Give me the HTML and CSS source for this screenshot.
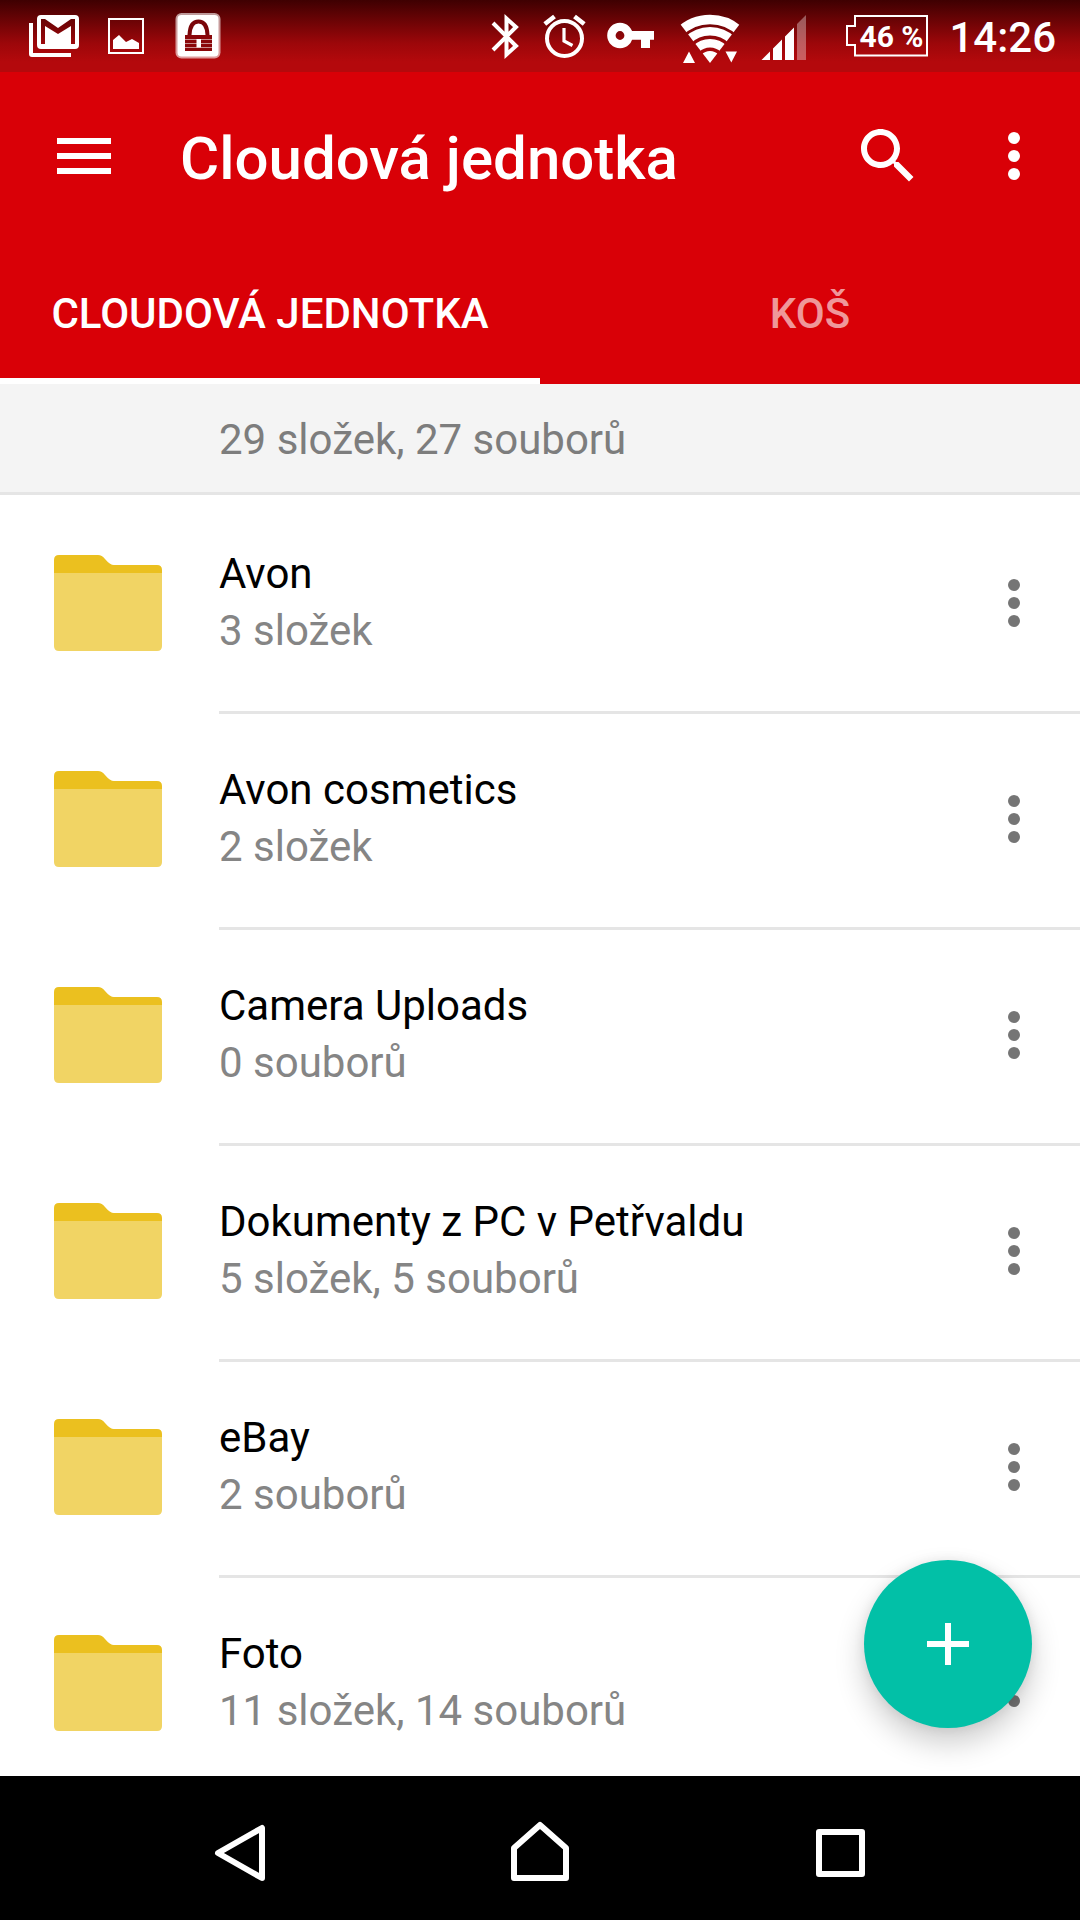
FILE: index.html
```html
<!DOCTYPE html>
<html lang="cs">
<head>
<meta charset="utf-8">
<meta name="viewport" content="width=device-width, initial-scale=1">
<title>Cloudová jednotka</title>
<link rel="stylesheet" href="styles.css">
</head>
<body>
<svg class="sprite" aria-hidden="true">
  <symbol id="folder" viewBox="0 0 108 96">
    <path fill="#ebc01f" d="M0 18V5Q0 0 5 0H44Q48 0 51 4Q56 10 60 10H103Q108 10 108 15V18Z"/>
    <path fill="#f1d464" d="M0 18H108V91Q108 96 103 96H5Q0 96 0 91Z"/>
  </symbol>
  <symbol id="more" viewBox="0 0 72 72">
    <circle cx="36" cy="18" r="6"/><circle cx="36" cy="36" r="6"/><circle cx="36" cy="54" r="6"/>
  </symbol>
</svg>
<div class="app">
  <div class="status">
    <div class="status-notes">
      <svg width="52" height="72" viewBox="27 0 52 72" fill="#fff" aria-hidden="true">
        <path d="M29 23H33V53H71V57H32Q29 57 29 54Z"/>
        <path fill-rule="evenodd" d="M41 15H75Q79 15 79 19V45Q79 49 75 49H41Q37 49 37 45V19Q37 15 41 15ZM41 44H45V26L58 34L71 26V44H75V19H71L58 28L45 19H41Z"/>
      </svg>
      <svg width="38" height="72" viewBox="107 0 38 72" fill="#fff" aria-hidden="true">
        <rect x="109" y="19" width="34" height="34" fill="none" stroke="#fff" stroke-width="2"/>
        <path d="M113 49V40L119 35L126 42L132 39L139 43V49Z"/>
      </svg>
      <svg width="50" height="72" viewBox="173 0 50 72" aria-hidden="true">
        <rect x="175.500" y="13" width="45" height="45.500" rx="6" fill="#fff" opacity=".6"/>
        <rect x="177.500" y="15" width="41" height="41.500" rx="4" fill="#fff"/>
        <path d="M189.500 35Q190 21.500 198.500 21.500T207.500 35" fill="none" stroke="#7a0609" stroke-width="4"/>
        <path fill="#8a070a" d="M185 35H212V51H185Z"/>
        <path stroke="#fff" stroke-opacity=".55" stroke-width="1" d="M185 39.500H212M185 43.500H212M185 47.500H212"/>
        <path fill="#fff" d="M196.500 39H201V47.500H196.500Z"/>
      </svg>
    </div>
    <div class="status-system">
      <svg width="32" height="72" viewBox="490 0 32 72" fill="none" stroke="#fff" stroke-width="4" aria-hidden="true">
        <path d="M493 23L516 46L506.500 54.500V18.500L516 27L493 50"/>
      </svg>
      <svg width="45" height="72" viewBox="542 0 45 72" fill="none" stroke="#fff" aria-hidden="true">
        <circle cx="564.500" cy="38.500" r="17.500" stroke-width="4"/>
        <path stroke-width="3.200" d="M564 28V41L572.500 45.500"/>
        <path stroke-width="4.600" d="M544.800 24L554.500 16.500M574.500 16.500L584.200 24"/>
      </svg>
      <svg width="48" height="72" viewBox="607 0 48 72" fill="#fff" aria-hidden="true">
        <circle cx="620" cy="35.500" r="8.600" fill="none" stroke="#fff" stroke-width="8.400"/>
        <path d="M629 31H654V39.700H650V48H641V39.700H629Z"/>
      </svg>
      <svg width="66" height="72" viewBox="675 0 66 72" fill="none" stroke="#fff" aria-hidden="true">
        <clipPath id="wifi-fan"><path d="M710 63L671 12H749Z"/></clipPath>
        <g clip-path="url(#wifi-fan)">
          <circle cx="710" cy="63" r="43.500" stroke-width="9.400"/>
          <circle cx="710" cy="63" r="31.700" stroke-width="8.600"/>
          <circle cx="710" cy="63" r="19.800" stroke-width="8.600"/>
          <circle cx="710" cy="63" r="6" stroke-width="12"/>
        </g>
        <path fill="#fff" stroke="none" d="M683 63L689 51.500L695 63ZM725.500 51.500H737L731.300 62.500Z"/>
      </svg>
      <svg width="46" height="72" viewBox="761 0 46 72" fill="#fff" aria-hidden="true">
        <path d="M761.500 60L770 51.500V60ZM773 60V48.500L782 39.500V60ZM785 60V36.500L794 27.500V60Z"/>
        <path opacity=".35" d="M797 60V24L806 15V60Z"/>
      </svg>
      <div class="battery">
        <svg width="83" height="72" viewBox="846 0 83 72" fill="none" stroke="#fff" stroke-width="2" aria-hidden="true">
          <path d="M855 16H927V55.500H855V45H847V26H855Z"/>
        </svg>
        <span class="battery-text">46 %</span>
      </div>
      <time class="clock">14:26</time>
    </div>
  </div>

  <header class="header">
    <div class="toolbar">
      <button class="icon-button" type="button" aria-label="Nabídka">
        <svg width="72" height="72" viewBox="0 0 72 72" fill="currentColor"><path d="M9 18H63V24H9ZM9 33H63V39H9ZM9 48H63V54H9Z"/></svg>
      </button>
      <h1 class="title">Cloudová jednotka</h1>
      <button class="icon-button" type="button" aria-label="Hledat">
        <svg width="72" height="72" viewBox="0 0 24 24" fill="currentColor"><path d="M15.500 14h-.79l-.28-.27C15.410 12.590 16 11.110 16 9.500 16 5.910 13.090 3 9.500 3S3 5.910 3 9.500 5.910 16 9.500 16c1.610 0 3.090-.59 4.230-1.570l.27.28v.79l5 4.990L20.490 19l-4.990-5zm-6 0C7.010 14 5 11.990 5 9.500S7.010 5 9.500 5 14 7.010 14 9.500 11.990 14 9.500 14z"/></svg>
      </button>
      <button class="icon-button" type="button" aria-label="Další možnosti">
        <svg width="72" height="72" fill="currentColor"><use href="#more"/></svg>
      </button>
    </div>
    <nav class="tabs">
      <a class="tab tab-active" href="#cloud" aria-current="page">CLOUDOVÁ JEDNOTKA</a>
      <a class="tab" href="#trash">KOŠ</a>
    </nav>
  </header>

  <main class="main" id="cloud">
    <p class="summary">29 složek, 27 souborů</p>
    <ul class="list">
      <li class="row">
        <svg class="folder" width="108" height="96" aria-hidden="true"><use href="#folder"/></svg>
        <div class="row-body">
          <a class="row-text" href="#avon"><span class="name">Avon</span><span class="count">3 složek</span></a>
          <button class="icon-button row-more" type="button" aria-label="Možnosti: Avon"><svg width="72" height="72" fill="currentColor"><use href="#more"/></svg></button>
        </div>
      </li>
      <li class="row">
        <svg class="folder" width="108" height="96" aria-hidden="true"><use href="#folder"/></svg>
        <div class="row-body">
          <a class="row-text" href="#avon-cosmetics"><span class="name">Avon cosmetics</span><span class="count">2 složek</span></a>
          <button class="icon-button row-more" type="button" aria-label="Možnosti: Avon cosmetics"><svg width="72" height="72" fill="currentColor"><use href="#more"/></svg></button>
        </div>
      </li>
      <li class="row">
        <svg class="folder" width="108" height="96" aria-hidden="true"><use href="#folder"/></svg>
        <div class="row-body">
          <a class="row-text" href="#camera-uploads"><span class="name">Camera Uploads</span><span class="count">0 souborů</span></a>
          <button class="icon-button row-more" type="button" aria-label="Možnosti: Camera Uploads"><svg width="72" height="72" fill="currentColor"><use href="#more"/></svg></button>
        </div>
      </li>
      <li class="row">
        <svg class="folder" width="108" height="96" aria-hidden="true"><use href="#folder"/></svg>
        <div class="row-body">
          <a class="row-text" href="#dokumenty"><span class="name">Dokumenty z PC v Petřvaldu</span><span class="count">5 složek, 5 souborů</span></a>
          <button class="icon-button row-more" type="button" aria-label="Možnosti: Dokumenty z PC v Petřvaldu"><svg width="72" height="72" fill="currentColor"><use href="#more"/></svg></button>
        </div>
      </li>
      <li class="row">
        <svg class="folder" width="108" height="96" aria-hidden="true"><use href="#folder"/></svg>
        <div class="row-body">
          <a class="row-text" href="#ebay"><span class="name">eBay</span><span class="count">2 souborů</span></a>
          <button class="icon-button row-more" type="button" aria-label="Možnosti: eBay"><svg width="72" height="72" fill="currentColor"><use href="#more"/></svg></button>
        </div>
      </li>
      <li class="row">
        <svg class="folder" width="108" height="96" aria-hidden="true"><use href="#folder"/></svg>
        <div class="row-body">
          <a class="row-text" href="#foto"><span class="name">Foto</span><span class="count">11 složek, 14 souborů</span></a>
          <button class="icon-button row-more" type="button" aria-label="Možnosti: Foto"><svg width="72" height="72" fill="currentColor"><use href="#more"/></svg></button>
        </div>
      </li>
    </ul>
    <button class="fab" type="button" aria-label="Přidat">
      <svg width="42" height="42" viewBox="0 0 42 42" fill="currentColor"><path d="M18 0H24V18H42V24H24V42H18V24H0V18H18Z"/></svg>
    </button>
  </main>

  <div class="navbar">
    <button class="nav-button" type="button" aria-label="Zpět">
      <svg width="72" height="72" viewBox="204 1812 72 72" fill="none" stroke="#fff" stroke-width="6" stroke-linejoin="round"><path d="M262 1828V1878L218 1853Z"/></svg>
    </button>
    <button class="nav-button" type="button" aria-label="Domů">
      <svg width="72" height="72" viewBox="504 1812 72 72" fill="none" stroke="#fff" stroke-width="6" stroke-linejoin="round"><path d="M514 1878V1848L540 1825L566 1848V1878Z"/></svg>
    </button>
    <button class="nav-button" type="button" aria-label="Poslední aplikace">
      <svg width="72" height="72" viewBox="804 1812 72 72" fill="none" stroke="#fff" stroke-width="6" stroke-linejoin="round"><path d="M819 1832H862V1874H819Z"/></svg>
    </button>
  </div>
</div>
</body>
</html>
```

FILE: styles.css
```css
* {
  box-sizing: border-box;
}

body {
  margin: 0;
  font-family: Roboto, "Noto Sans", sans-serif;
  font-size: 42px;
  line-height: 57px;
  color: #000;
  background: #fff;
}

svg {
  display: block;
  flex: none;
}

a {
  color: inherit;
  text-decoration: none;
}

button {
  margin: 0;
  padding: 0;
  border: 0;
  background: none;
  color: inherit;
  font: inherit;
}

.sprite {
  position: absolute;
  width: 0;
  height: 0;
}

.app {
  display: flex;
  flex-direction: column;
  height: 100vh;
}

/* System status bar */
.status {
  display: flex;
  justify-content: space-between;
  flex: none;
  height: 72px;
  padding: 0 24px 0 27px;
  color: #fff;
  font-weight: 500;
  background: linear-gradient(#3e0001, #9c070a 60%, #b4090c 86%, #b4090c);
}

.status-notes {
  display: flex;
  gap: 28px;
}

.status-system {
  display: flex;
  gap: 20px;
}

.battery {
  display: grid;
  align-items: center;
  margin-left: 19px;
}

.battery > * {
  grid-area: 1 / 1;
}

.battery-text {
  padding-left: 13px;
  font-size: 30px;
  font-weight: 700;
}

.clock {
  line-height: 75px;
}

/* App header */
.header {
  flex: none;
  color: #fff;
  background: #d90007;
}

.toolbar {
  display: flex;
  align-items: center;
  height: 168px;
  padding: 0 30px 0 48px;
}

.icon-button {
  flex: none;
}

.title {
  flex: 1;
  margin: 0;
  padding: 5px 0 0 60px;
  font-size: 60px;
  font-weight: 500;
  line-height: 72px;
}

.toolbar .icon-button:last-child {
  margin-left: 54px;
}

.tabs {
  display: flex;
  height: 144px;
}

.tab {
  display: flex;
  flex: 1;
  align-items: center;
  justify-content: center;
  padding-top: 9px;
  border-bottom: 6px solid transparent;
  color: rgba(255, 255, 255, 0.6);
  font-weight: 500;
}

.tab-active {
  border-color: #fff;
  color: #fff;
}

/* Folder list */
.main {
  position: relative;
  display: flex;
  flex: 1;
  flex-direction: column;
  min-height: 0;
}

.summary {
  flex: none;
  margin: 0;
  padding: 27px 48px 24px 219px;
  border-bottom: 3px solid #e5e5e5;
  color: #7d7d7d;
  background: #f4f4f4;
}

.list {
  flex: 1;
  min-height: 0;
  margin: 0;
  padding: 0;
  overflow-y: auto;
  list-style: none;
  scrollbar-width: none;
}

.row {
  display: flex;
  align-items: center;
  height: 216px;
  padding-left: 54px;
}

.row-body {
  display: flex;
  flex: 1;
  align-items: center;
  align-self: stretch;
  min-width: 0;
  margin-left: 57px;
  padding-right: 30px;
}

.row + .row .row-body {
  box-shadow: inset 0 3px #e5e5e5;
}

.row-text {
  display: flex;
  flex: 1;
  flex-direction: column;
  min-width: 0;
  padding-bottom: 2px;
}

.count {
  color: #858585;
}

.row-more {
  color: #757575;
}

.fab {
  position: absolute;
  right: 48px;
  bottom: 48px;
  display: flex;
  align-items: center;
  justify-content: center;
  width: 168px;
  height: 168px;
  border-radius: 50%;
  color: #fff;
  background: #02c0a7;
  box-shadow: 0 15px 30px rgba(0, 0, 0, 0.2), 0 0 12px rgba(0, 0, 0, 0.08);
}

/* System navigation bar */
.navbar {
  display: flex;
  flex: none;
  justify-content: center;
  gap: 28px;
  height: 144px;
  background: #000;
}

.nav-button {
  display: flex;
  align-items: center;
  justify-content: center;
  width: 272px;
}
```
